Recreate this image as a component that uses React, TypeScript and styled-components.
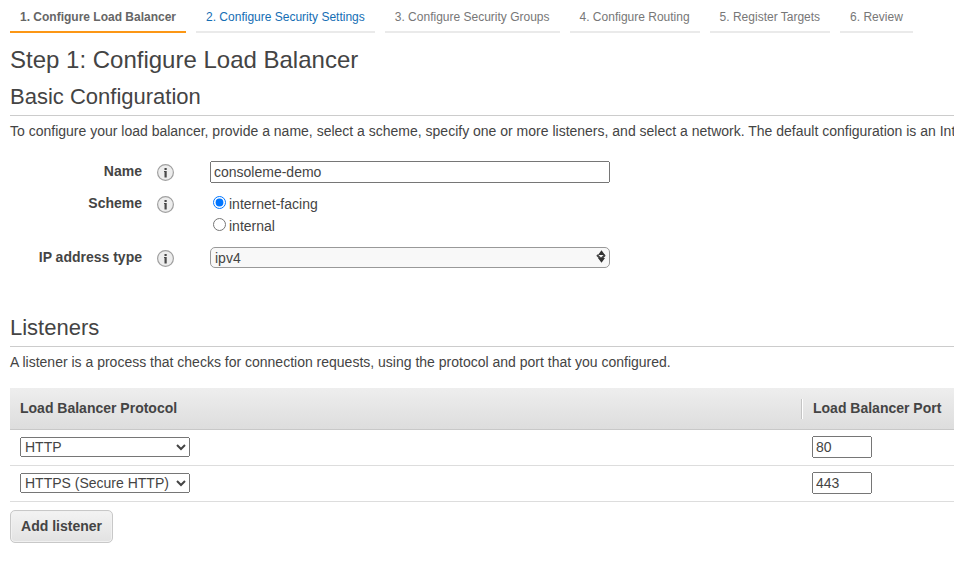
import React from 'react';
import styled, { createGlobalStyle } from 'styled-components';

const GlobalStyle = createGlobalStyle`
  * { box-sizing: border-box; }
  html, body { margin: 0; padding: 0; overflow: hidden; background: #fff; }
  body, input, select, button {
    font-family: "Liberation Sans", Arial, sans-serif;
    font-size: 14px;
    color: #444;
  }
`;

const Page = styled.main`
  height: 575px;
  padding-left: 10px;
  overflow: hidden;
`;

const Tabs = styled.nav`
  display: flex;
  gap: 10px;
`;

const Tab = styled.span<{ $state?: 'active' | 'link' }>`
  height: 33px;
  padding: 10px 10px 0;
  font-size: 12px;
  line-height: 14px;
  white-space: nowrap;
  font-weight: ${p => (p.$state === 'active' ? 'bold' : 'normal')};
  color: ${p => (p.$state === 'active' ? '#666' : p.$state === 'link' ? '#146eb4' : '#777')};
  border-bottom: 2px solid ${p => (p.$state === 'active' ? '#fc9715' : '#eaeaea')};
`;

const Title = styled.h1`
  margin: 13px 0 0;
  font-size: 24px;
  line-height: 28px;
  font-weight: normal;
`;

const SectionTitle = styled.h2`
  height: 42px;
  margin: 0;
  padding-top: 10px;
  font-size: 22px;
  line-height: 26px;
  font-weight: normal;
  border-bottom: 1px solid #ccc;
`;

const Description = styled.p`
  margin: 7px 0 0;
  line-height: 16px;
  white-space: nowrap;
`;

const Form = styled.form`
  display: grid;
  grid-template-columns: 132px 68px 400px;
  grid-template-rows: 32px 54px 58px;
  padding-top: 22px;
`;

const Label = styled.span`
  padding-top: 2px;
  line-height: 16px;
  font-weight: bold;
  text-align: right;
`;

const InfoIcon = styled.svg`
  display: block;
  width: 17px;
  height: 17px;
  margin: 3px 0 0 15px;
`;

const TextInput = styled.input<{ $width: number }>`
  display: block;
  width: ${p => p.$width}px;
  height: 22px;
  margin: 0;
`;

const Radios = styled.div`
  display: flex;
  flex-direction: column;
`;

const RadioLabel = styled.label`
  display: flex;
  height: 22px;
  line-height: 16px;
  padding-top: 3px;
  input { width: 13px; height: 13px; margin: 0 3px; }
`;

const SelectWrap = styled.div`
  position: relative;
  height: 21px;
`;

const IpSelect = styled.select`
  display: block;
  width: 400px;
  height: 21px;
  padding: 0;
  border: 1px solid #999;
  border-radius: 5px;
  background-color: #f8f8f8;
`;

const Arrows = styled.svg`
  position: absolute;
  right: 4px;
  top: 3px;
  width: 9px;
  height: 13px;
  pointer-events: none;
`;

const Table = styled.section`
  margin-top: 18px;
`;

const Row = styled.div`
  display: grid;
  grid-template-columns: 791px 1fr;
  align-items: center;
  height: 36px;
  padding-bottom: 2px;
  border-bottom: 1px solid #ddd;
`;

const HeadRow = styled(Row)`
  height: 42px;
  padding-bottom: 0;
  font-weight: bold;
  background: linear-gradient(#eee, #ddd);
  border-bottom-color: #c8c8c8;
`;

const Cell = styled.div<{ $column: 'protocol' | 'port' }>`
  padding-left: ${p => (p.$column === 'protocol' ? 10 : 11)}px;
  white-space: nowrap;
`;

const HeadCell = styled(Cell)`
  height: 20px;
  line-height: 19px;
  border-left: ${p => (p.$column === 'port' ? '1px solid #c4c4c4' : '0')};
  box-shadow: ${p => (p.$column === 'port' ? 'inset 1px 0 #fff' : 'none')};
`;

const ProtocolSelect = styled.select`
  display: block;
  width: 170px;
  height: 20px;
`;

const AddButton = styled.button`
  display: block;
  width: 103px;
  height: 33px;
  margin-top: 8px;
  padding: 0 0 2px;
  font-weight: bold;
  border: 1px solid #c8c8c8;
  border-radius: 5px;
  background: linear-gradient(#f3f3f3, #e2e2e2);
  box-shadow: inset 0 0 0 1px #f1f1f1;
`;

const Info = () => (
  <InfoIcon viewBox="0 0 17 17">
    <circle cx="8.5" cy="8.5" r="7.9" fill="#ededed" stroke="#a0a0a0" strokeWidth="1.2" />
    <path d="M7.5 4h2.2v2H7.5zM7 7h2.7v6.5H7.5V7.9H7z" fill="#484848" />
  </InfoIcon>
);

const steps: { text: string; state?: 'active' | 'link' }[] = [
  { text: '1. Configure Load Balancer', state: 'active' },
  { text: '2. Configure Security Settings', state: 'link' },
  { text: '3. Configure Security Groups' },
  { text: '4. Configure Routing' },
  { text: '5. Register Targets' },
  { text: '6. Review' },
];

const listeners = [
  { protocol: 'HTTP', port: '80' },
  { protocol: 'HTTPS (Secure HTTP)', port: '443' },
];

export default function App() {
  return (
    <Page>
      <GlobalStyle />
      <Tabs>
        {steps.map(s => <Tab key={s.text} $state={s.state}>{s.text}</Tab>)}
      </Tabs>
      <Title>Step 1: Configure Load Balancer</Title>
      <SectionTitle>Basic Configuration</SectionTitle>
      <Description>
        To configure your load balancer, provide a name, select a scheme, specify one or more listeners, and select a network. The default configuration is an Int
      </Description>
      <Form>
        <Label>Name</Label>
        <Info />
        <TextInput $width={400} defaultValue="consoleme-demo" />
        <Label>Scheme</Label>
        <Info />
        <Radios>
          <RadioLabel><input type="radio" name="scheme" defaultChecked />internet-facing</RadioLabel>
          <RadioLabel><input type="radio" name="scheme" />internal</RadioLabel>
        </Radios>
        <Label>IP address type</Label>
        <Info />
        <SelectWrap>
          <IpSelect defaultValue="ipv4"><option>ipv4</option></IpSelect>
          <Arrows viewBox="0 0 9 13"><path d="M4.5 0.3 8 5H1zM4.5 12.7 1 8h7z" fill="#333" /></Arrows>
        </SelectWrap>
      </Form>
      <SectionTitle>Listeners</SectionTitle>
      <Description>
        A listener is a process that checks for connection requests, using the protocol and port that you configured.
      </Description>
      <Table>
        <HeadRow>
          <HeadCell $column="protocol">Load Balancer Protocol</HeadCell>
          <HeadCell $column="port">Load Balancer Port</HeadCell>
        </HeadRow>
        {listeners.map(l => (
          <Row key={l.port}>
            <Cell $column="protocol">
              <ProtocolSelect defaultValue={l.protocol}><option>{l.protocol}</option></ProtocolSelect>
            </Cell>
            <Cell $column="port"><TextInput $width={60} defaultValue={l.port} /></Cell>
          </Row>
        ))}
      </Table>
      <AddButton type="button">Add listener</AddButton>
    </Page>
  );
}
